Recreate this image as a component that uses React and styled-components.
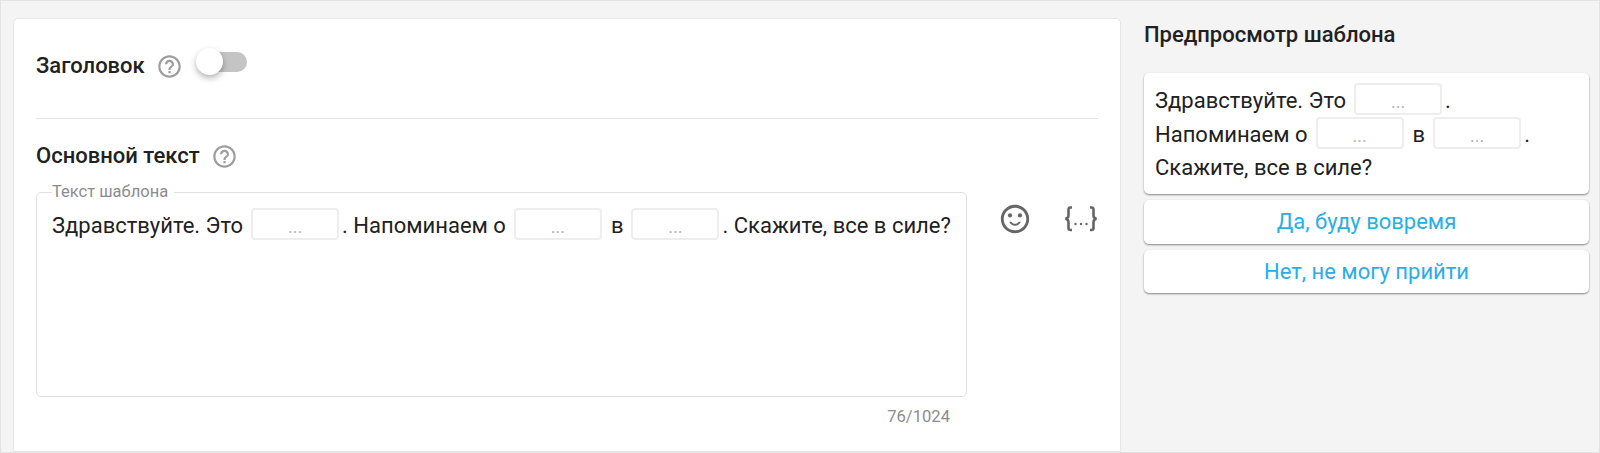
import React from 'react'
import styled, { createGlobalStyle } from 'styled-components'

const GlobalStyle = createGlobalStyle`
  html, body {
    margin: 0;
    padding: 0;
    height: 453px;
    overflow: hidden;
    background: #f4f4f4;
  }
  body {
    font-family: Roboto, "Noto Sans", sans-serif;
    color: #212121;
  }
`

const Page = styled.div`
  box-sizing: border-box;
  width: 1600px;
  height: 453px;
  display: flex;
  align-items: stretch;
  gap: 23px;
  padding: 17px 11px 0 12px;
  background: #f4f4f4;
  border: 1px solid #e3e3e3;
  overflow: hidden;
`

const EditorCard = styled.section`
  box-sizing: border-box;
  width: 1108px;
  height: 434px;
  flex: none;
  padding: 0 22px;
  background: #fff;
  border: 1px solid #e6e6e6;
  border-radius: 5px 5px 0 0;
`

const HeaderRow = styled.div`
  box-sizing: border-box;
  display: flex;
  align-items: center;
  height: 100px;
  border-bottom: 1px solid #e4e4e4;
  padding-bottom: 5px;
`

const Label = styled.span`
  font-size: 22px;
  font-weight: 500;
  line-height: 24px;
  color: #212121;
`

const HelpIcon = styled.span`
  display: inline-flex;
  margin-left: 11px;
  color: #9e9e9e;
`

const Toggle = styled.span`
  position: relative;
  display: inline-block;
  width: 46px;
  height: 20px;
  margin: -8px 0 0 18px;
  background: #c4c4c4;
  border-radius: 10px;
`

const Knob = styled.span`
  position: absolute;
  left: -5px;
  top: -4px;
  width: 27px;
  height: 27px;
  background: #fff;
  border-radius: 50%;
  box-shadow: 0 3px 6px rgba(0, 0, 0, 0.3);
`

const BodyHead = styled.div`
  display: flex;
  align-items: center;
  height: 24px;
  margin-top: 25px;
`

const FieldRow = styled.div`
  display: flex;
  align-items: flex-start;
  margin-top: 24px;
`

const FieldColumn = styled.div`
  width: 930px;
  flex: none;
`

const Field = styled.fieldset`
  box-sizing: border-box;
  width: 930px;
  height: 214px;
  margin: -9px 0 0;
  padding: 7px 15px 0;
  border: 1px solid #e0e0e0;
  border-radius: 5px;
`

const Legend = styled.legend`
  padding: 0 6px 0 0;
  font-size: 16.5px;
  line-height: 18px;
  color: #8c8c8c;
`

const TemplateText = styled.div`
  font-size: 22px;
  line-height: 33px;
  color: #212121;
  white-space: nowrap;
`

const Chip = styled.span`
  box-sizing: border-box;
  display: inline-block;
  width: 88px;
  height: 32px;
  margin: 0 ${(p) => p.$right}px 0 ${(p) => p.$left}px;
  border: 2px solid #eeeeee;
  border-radius: 4px;
  background: #fff;
  text-align: center;
  font-size: 18px;
  line-height: 33px;
  color: #b5b5b5;
`

const Counter = styled.div`
  margin: 11px 16px 0 0;
  text-align: right;
  font-size: 16.6px;
  line-height: 18px;
  color: #8c8c8c;
`

const Tools = styled.div`
  display: flex;
  align-items: center;
  gap: 32px;
  margin: 10px 0 0 32px;
  color: #666;
`

const BracesIcon = styled.svg`
  display: block;
`

const Preview = styled.aside`
  width: 445px;
  flex: none;
`

const PreviewTitle = styled.h2`
  margin: 5px 0 26px;
  font-size: 22px;
  font-weight: 500;
  line-height: 24px;
  color: #212121;
`

const MessageCard = styled.div`
  box-sizing: border-box;
  height: 121px;
  padding: 10px 11px 0;
  background: #fff;
  border-radius: 5px;
  box-shadow: 0 1px 2px rgba(0, 0, 0, 0.45);
  font-size: 22px;
  line-height: 33px;
`

const ReplyButton = styled.button`
  display: block;
  box-sizing: border-box;
  width: 100%;
  height: 43.5px;
  margin-top: 6px;
  padding: 0;
  border: 0;
  background: #fff;
  border-radius: 5px;
  box-shadow: 0 1px 2px rgba(0, 0, 0, 0.45);
  font-family: inherit;
  font-size: 22px;
  color: #29aee6;
`

const Help = () => (
  <HelpIcon>
    <svg width="27" height="27" viewBox="0 0 24 24" fill="currentColor">
      <path d="M11 18h2v-2h-2v2zm1-16C6.48 2 2 6.48 2 12s4.48 10 10 10 10-4.48 10-10S17.52 2 12 2zm0 18c-4.41 0-8-3.59-8-8s3.59-8 8-8 8 3.59 8 8-3.59 8-8 8zm0-14c-2.21 0-4 1.79-4 4h2c0-1.1.9-2 2-2s2 .9 2 2c0 2-3 1.75-3 5h2c0-2.25 3-2.5 3-5 0-2.21-1.79-4-4-4z" />
    </svg>
  </HelpIcon>
)

export default function App() {
  return (
    <>
      <GlobalStyle />
      <Page>
        <EditorCard>
          <HeaderRow>
            <Label>Заголовок</Label>
            <Help />
            <Toggle>
              <Knob />
            </Toggle>
          </HeaderRow>
          <BodyHead>
            <Label>Основной текст</Label>
            <Help />
          </BodyHead>
          <FieldRow>
            <FieldColumn>
              <Field>
                <Legend>Текст шаблона</Legend>
                <TemplateText>
                  Здравствуйте. Это<Chip $left={8} $right={3}>...</Chip>. Напоминаем о
                  <Chip $left={8} $right={9}>...</Chip>в<Chip $left={8} $right={3}>...</Chip>. Скажите, все в силе?
                </TemplateText>
              </Field>
              <Counter>76/1024</Counter>
            </FieldColumn>
            <Tools>
              <svg width="34" height="34" viewBox="0 0 24 24" fill="currentColor">
                <path d="M11.99 2C6.47 2 2 6.48 2 12s4.47 10 9.99 10C17.52 22 22 17.52 22 12S17.52 2 11.99 2zM12 20c-4.42 0-8-3.58-8-8s3.58-8 8-8 8 3.58 8 8-3.58 8-8 8z" />
                <circle cx="15.5" cy="9.5" r="1.5" />
                <circle cx="8.5" cy="9.5" r="1.5" />
                <path d="M12 17.5c2.33 0 4.31-1.46 5.11-3.5h-1.9c-.7 1.1-1.9 1.8-3.21 1.8S9.49 15.1 8.79 14h-1.9c.8 2.04 2.78 3.5 5.11 3.5z" transform="translate(2.4 2.8) scale(.8)" />
              </svg>
              <BracesIcon width="34" height="28" viewBox="0 0 34 28" fill="none" stroke="currentColor" strokeWidth="2.6">
                <path d="M8 2.5H6.5C5 2.5 4.5 3.4 4.5 4.6V10.5C4.5 12.4 3.6 13.3 1.5 13.8 3.6 14.3 4.5 15.2 4.5 17.1V23C4.5 24.2 5 25 6.5 25H8" />
                <path d="M26 2.5H27.5C29 2.5 29.5 3.4 29.5 4.6V10.5C29.5 12.4 30.4 13.3 32.5 13.8 30.4 14.3 29.5 15.2 29.5 17.1V23C29.5 24.2 29 25 27.5 25H26" />
                <g fill="currentColor" stroke="none">
                  <circle cx="11.5" cy="19" r="1.2" />
                  <circle cx="17" cy="19" r="1.2" />
                  <circle cx="22.5" cy="19" r="1.2" />
                </g>
              </BracesIcon>
            </Tools>
          </FieldRow>
        </EditorCard>
        <Preview>
          <PreviewTitle>Предпросмотр шаблона</PreviewTitle>
          <MessageCard>
            Здравствуйте. Это<Chip $left={8} $right={3}>...</Chip>.<br />
            Напоминаем о<Chip $left={8} $right={9}>...</Chip>в<Chip $left={8} $right={3}>...</Chip>.<br />
            Скажите, все в силе?
          </MessageCard>
          <ReplyButton>Да, буду вовремя</ReplyButton>
          <ReplyButton>Нет, не могу прийти</ReplyButton>
        </Preview>
      </Page>
    </>
  )
}
